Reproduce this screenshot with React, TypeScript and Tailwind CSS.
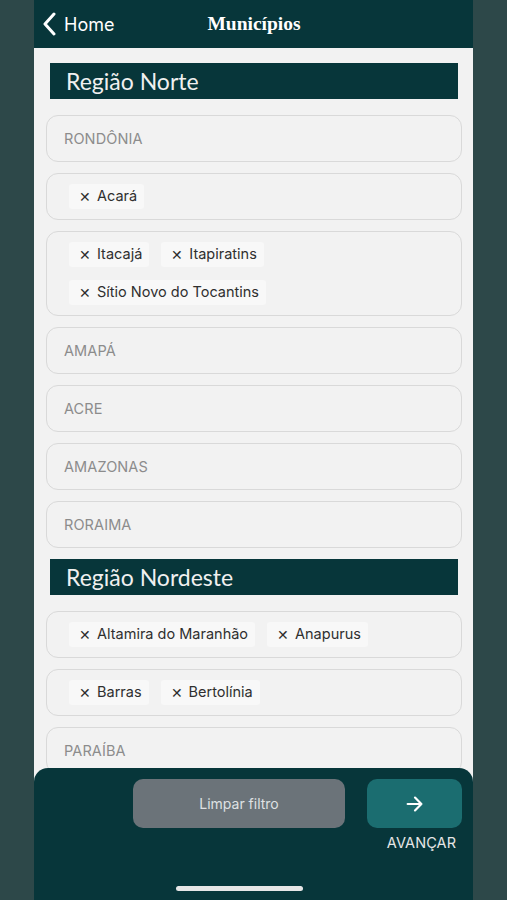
import React from "react";

type Row = { kind: "text"; label: string } | { kind: "chips"; chips: string[] };

const norte: Row[] = [
  { kind: "text", label: "RONDÔNIA" },
  { kind: "chips", chips: ["Acará"] },
  { kind: "chips", chips: ["Itacajá", "Itapiratins", "Sítio Novo do Tocantins"] },
  { kind: "text", label: "AMAPÁ" },
  { kind: "text", label: "ACRE" },
  { kind: "text", label: "AMAZONAS" },
  { kind: "text", label: "RORAIMA" },
];

const nordeste: Row[] = [
  { kind: "chips", chips: ["Altamira do Maranhão", "Anapurus"] },
  { kind: "chips", chips: ["Barras", "Bertolínia"] },
  { kind: "text", label: "PARAÍBA" },
  { kind: "text", label: "PERNAMBUCO" },
];

function Card({ row }: { row: Row }) {
  if (row.kind === "text") {
    return (
      <div className="h-[47px] shrink-0 rounded-[12px] border border-[#d9d9d9] bg-[#f2f2f2] pl-[17px] flex items-center">
        <span className="text-[14.5px] text-[#8c8c8c] tracking-[0.1px]">{row.label}</span>
      </div>
    );
  }
  return (
    <div className="shrink-0 rounded-[12px] border border-[#d9d9d9] bg-[#f2f2f2] pl-[22px] pr-[12px] py-[10px] flex flex-wrap gap-x-[12px] gap-y-[13px]">
      {row.chips.map((c) => (
        <div
          key={c}
          className="h-[25px] rounded-[3px] bg-[#f8f8f8] pl-[10px] pr-[7px] flex items-center gap-[6px] text-[#2f2f2f]"
        >
          <span className="text-[14px] leading-none">✕</span>
          <span className="text-[14.5px] leading-none">{c}</span>
        </div>
      ))}
    </div>
  );
}

function RegionHeader({ title }: { title: string }) {
  return (
    <div
      className="h-[36px] shrink-0 mx-[4px] bg-[#07363a] flex items-center pl-[16px]"
      style={{ fontFamily: "Lato, 'Noto Sans', sans-serif" }}
    >
      <span className="text-[23px] text-[#f0f0f0] leading-none">{title}</span>
    </div>
  );
}

export default function App() {
  return (
    <div
      className="w-[507px] h-[900px] bg-[#2d4849] flex justify-center overflow-hidden"
      style={{ fontFamily: "Inter, 'Liberation Sans', sans-serif" }}
    >
      <div className="w-[439px] h-full relative flex flex-col overflow-hidden">
        <div className="h-[48px] shrink-0 bg-[#07363a] relative flex items-center">
          <div className="flex items-center pl-[8px] gap-[6px] text-white">
            <svg width="16" height="24" viewBox="0 0 16 24" fill="none">
              <path d="M12 2 L3 12 L12 22" stroke="white" strokeWidth="3" strokeLinecap="round" strokeLinejoin="round" />
            </svg>
            <span className="text-[18px]">Home</span>
          </div>
          <div
            className="absolute left-0 right-0 top-0 h-full flex items-center justify-center pointer-events-none"
            style={{ fontFamily: "'Liberation Serif', serif" }}
          >
            <span className="text-[19.5px] font-bold text-white ml-[1px]">Municípios</span>
          </div>
        </div>
        <div className="flex-1 bg-[#f2f2f2] pl-[12px] pr-[11px] pt-[15px] flex flex-col">
          <RegionHeader title="Região Norte" />
          <div className="mt-[16px] flex flex-col gap-[11px]">
            {norte.map((r, i) => (
              <Card key={i} row={r} />
            ))}
          </div>
          <div className="mt-[11px]">
            <RegionHeader title="Região Nordeste" />
          </div>
          <div className="mt-[16px] flex flex-col gap-[11px]">
            {nordeste.map((r, i) => (
              <Card key={i} row={r} />
            ))}
          </div>
        </div>
        <div className="absolute left-0 right-0 bottom-0 h-[132px] bg-[#07363a] rounded-t-[14px] flex flex-col">
          <div className="flex pt-[11px] pl-[99px] pr-[11px] gap-[22px]">
            <div className="w-[212px] h-[49px] rounded-[10px] bg-[#6b7379] flex items-center justify-center">
              <span className="text-[14px] text-[#dfe1e3]">Limpar filtro</span>
            </div>
            <div className="flex flex-col items-center">
              <div className="w-[95px] h-[49px] rounded-[10px] bg-[#1b6d70] flex items-center justify-center">
                <svg width="22" height="22" viewBox="0 0 24 24" fill="none">
                  <path d="M4 12 H19 M12 5 L19 12 L12 19" stroke="white" strokeWidth="2.4" strokeLinecap="round" strokeLinejoin="round" />
                </svg>
              </div>
              <span className="mt-[4px] text-[14.5px] text-[#e6e6e6] tracking-[0.1px] ml-[14px]">AVANÇAR</span>
            </div>
          </div>
          <div className="flex-1" />
          <div className="flex justify-center pb-[9px]">
            <div className="w-[127px] h-[5px] rounded-full bg-[#e6e6e6] -ml-[28px]" />
          </div>
        </div>
      </div>
    </div>
  );
}
